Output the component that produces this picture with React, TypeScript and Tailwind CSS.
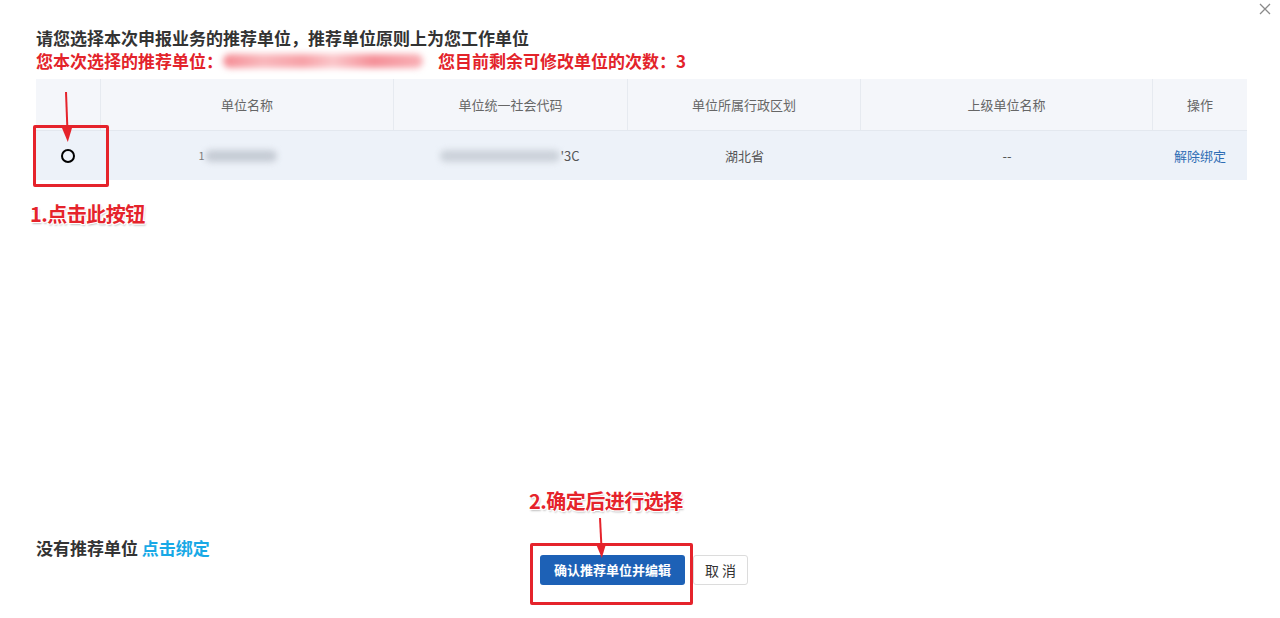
import React from "react";

const font = { fontFamily: '"Noto Sans CJK SC", "Noto Sans", sans-serif' };

export default function App() {
  const cols = [
    { w: "w-[65px]", label: "" },
    { w: "w-[293px]", label: "单位名称" },
    { w: "w-[234px]", label: "单位统一社会代码" },
    { w: "w-[233px]", label: "单位所属行政区划" },
    { w: "w-[292px]", label: "上级单位名称" },
    { w: "flex-1", label: "操作" },
  ];
  return (
    <div
      className="relative w-full h-[618px] bg-white overflow-hidden font-['Noto_Sans_CJK_SC',sans-serif]"
      style={font}
    >
      {/* close */}
      <svg className="absolute right-[9px] top-[3px]" width="12" height="12" viewBox="0 0 12 12">
        <path d="M1 1L11 11M11 1L1 11" stroke="#8a8a8a" strokeWidth="1.3" />
      </svg>

      <div className="pl-[36px] pr-[33px] pt-[26px]">
        <div className="text-[17px] leading-[23px] font-bold text-[#333]">
          请您选择本次申报业务的推荐单位，推荐单位原则上为您工作单位
        </div>
        <div className="flex items-center text-[17px] leading-[23px] font-bold text-[#e3232a]">
          <span>您本次选择的推荐单位：</span>
          <span className="w-[203px] h-[23px] flex items-center">
            <span className="block w-[200px] h-[14px] rounded-full bg-[linear-gradient(90deg,#f58b93,#f9b7bc_20%,#f7a0a6_40%,#fbc6ca_55%,#f58f97_75%,#f9b0b6)] blur-[3px]" />
          </span>
          <span className="ml-[12px]">您目前剩余可修改单位的次数：3</span>
        </div>

        {/* table */}
        <div className="mt-[7px] text-[13px]">
          <div className="flex h-[51px] bg-[#f4f6fa] text-[#666]">
            {cols.map((c, i) => (
              <div
                key={i}
                className={`${c.w} flex items-center justify-center ${i < cols.length - 1 ? "border-r border-[#e6eaf0]" : ""}`}
              >
                {c.label}
              </div>
            ))}
          </div>
          <div className="flex h-[50px] bg-[#edf2f9] text-[#555] border-t border-[#e3e8ef]">
            <div className="w-[65px] flex items-center justify-center">
              <span className="w-[14px] h-[14px] rounded-full border-2 border-black ml-[-2px]" />
            </div>
            <div className="w-[293px] flex items-center justify-center">
              <span className="text-[#777] text-[11px] ml-[-20px]">1</span>
              <span className="block w-[72px] h-[12px] rounded-full bg-[#c6ccd5] blur-[3px]" />
            </div>
            <div className="w-[234px] flex items-center justify-center">
              <span className="block w-[120px] h-[12px] rounded-full bg-[#ccd2da] blur-[3px] ml-[-2px]" />
              <span>'3C</span>
            </div>
            <div className="w-[233px] flex items-center justify-center">湖北省</div>
            <div className="w-[292px] flex items-center justify-center">--</div>
            <div className="flex-1 flex items-center justify-center text-[#2e6db4]">解除绑定</div>
          </div>
        </div>

        {/* bottom */}
        <div className="mt-[356px] flex items-start">
          <div className="w-[504px] text-[17px] leading-[23px] font-bold text-[#333]">
            没有推荐单位 <span className="text-[#18a9e6]">点击绑定</span>
          </div>
          <div className="mt-[19px] flex gap-[8px]">
            <button className="w-[145px] h-[30px] rounded-[3px] bg-[#1d61b6] text-white text-[13px] font-bold">
              确认推荐单位并编辑
            </button>
            <button className="w-[55px] h-[30px] rounded-[3px] border border-[#dcdcdc] bg-white text-[#333] text-[14px]">
              取 消
            </button>
          </div>
        </div>
      </div>

      {/* annotation 1 */}
      <div className="absolute left-[33px] top-[125px] w-[76px] h-[62px] border-[3px] border-[#e5232b] rounded-[2px]" />
      <svg className="absolute left-[56px] top-[90px]" width="20" height="56" viewBox="0 0 20 56">
        <path d="M10 2 L11.5 42" stroke="#e5232b" strokeWidth="2" />
        <path d="M6 38 L16 38 L11.8 52 Z" fill="#e5232b" />
      </svg>
      <div className="absolute left-[30px] top-[200px] text-[20px] leading-[28px] font-bold text-[#e5232b] tracking-[-0.5px] [text-shadow:1px_1px_0_#fff,-1px_-1px_0_#fff,1px_-1px_0_#fff,-1px_1px_0_#fff,1px_2px_2px_rgba(0,0,0,0.25)]">
        1.点击此按钮
      </div>

      {/* annotation 2 */}
      <div className="absolute left-[529px] top-[487px] text-[20px] leading-[28px] font-bold text-[#e5232b] tracking-[-0.5px] [text-shadow:1px_1px_0_#fff,-1px_-1px_0_#fff,1px_-1px_0_#fff,-1px_1px_0_#fff,1px_2px_2px_rgba(0,0,0,0.25)]">
        2.确定后进行选择
      </div>
      <svg className="absolute left-[590px] top-[516px]" width="20" height="46" viewBox="0 0 20 46">
        <path d="M10 2 L11.5 32" stroke="#e5232b" strokeWidth="2" />
        <path d="M6 28 L16 28 L11.8 42 Z" fill="#e5232b" />
      </svg>
      <div className="absolute left-[530px] top-[543px] w-[163px] h-[62px] border-[3px] border-[#e5232b] rounded-[2px]" />
    </div>
  );
}
